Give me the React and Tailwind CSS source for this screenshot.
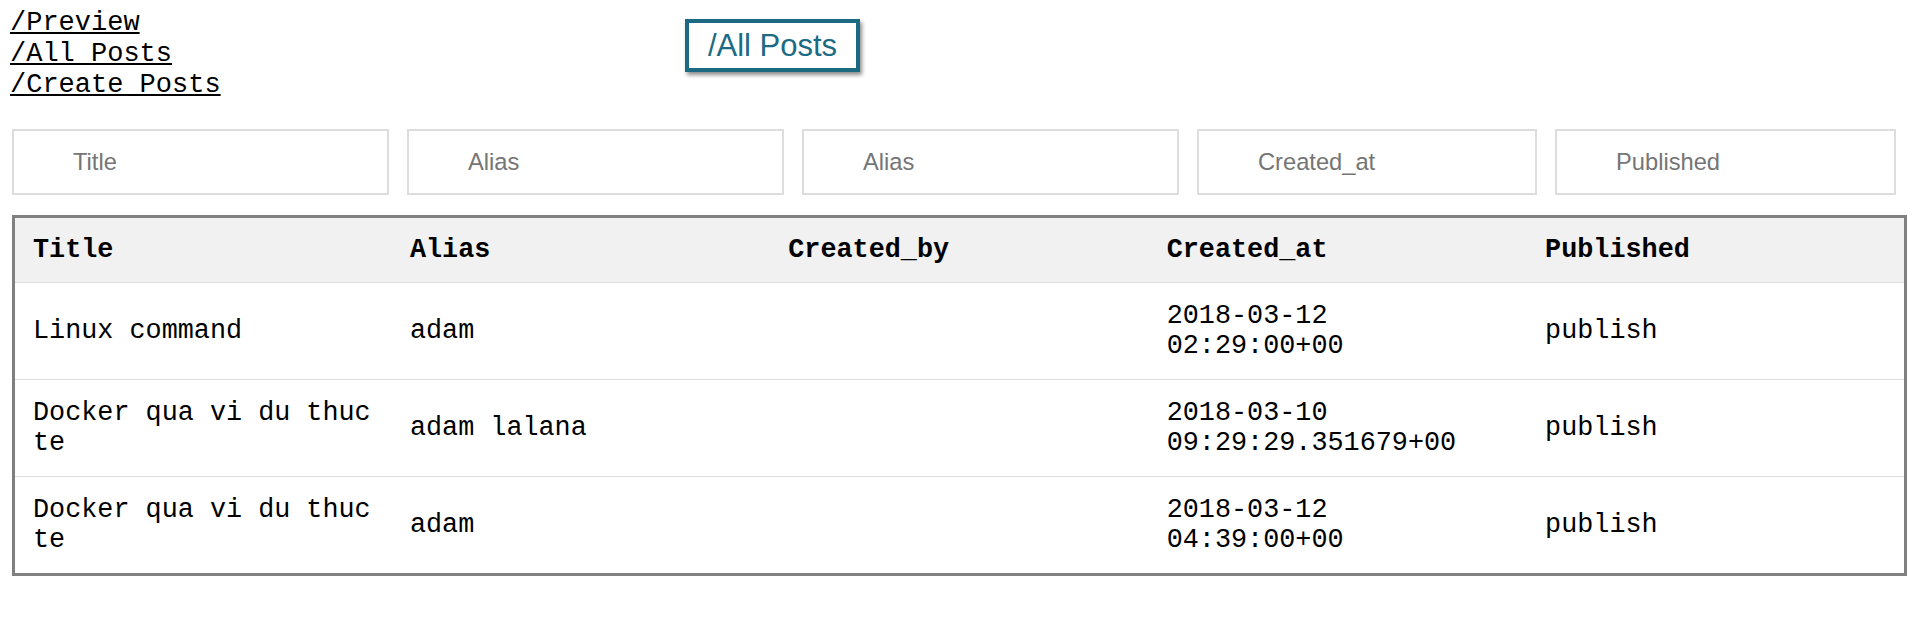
import React from 'react';

const links = ['/Preview', '/All Posts', '/Create Posts'];

const filters = [
  { label: 'Title', w: 'w-[377px]' },
  { label: 'Alias', w: 'w-[377px]' },
  { label: 'Alias', w: 'w-[377px]' },
  { label: 'Created_at', w: 'w-[340px]' },
  { label: 'Published', w: 'w-[341px]' },
];

const posts = [
  { title: 'Linux command', alias: 'adam', createdBy: '', createdAt: '2018-03-12 02:29:00+00', published: 'publish' },
  { title: 'Docker qua vi du thuc te', alias: 'adam lalana', createdBy: '', createdAt: '2018-03-10 09:29:29.351679+00', published: 'publish' },
  { title: 'Docker qua vi du thuc te', alias: 'adam', createdBy: '', createdAt: '2018-03-12 04:39:00+00', published: 'publish' },
];

const cell = 'pl-[18px] pr-[18px] align-middle text-left';

const App = () => {
  return (
    <div className="min-h-screen bg-white text-black font-['Liberation_Mono',monospace]">
      {/* Header */}
      <div className="flex items-start">
        <div className="w-[685px] pl-[10px] pt-[8px] text-[27px] leading-[31px]">
          {links.map((l) => (
            <div key={l}>
              <a href="#" className="underline underline-offset-[2px] decoration-[2px]">{l}</a>
            </div>
          ))}
        </div>
        <div className="mt-[19px] w-[175px] h-[53px] border-[4px] border-[#1b6a82] shadow-[2px_3px_4px_rgba(0,0,0,0.45)] flex items-center justify-center">
          <span className="font-['Liberation_Sans',Arial,sans-serif] text-[31px] text-[#1c6a84] leading-none">/All Posts</span>
        </div>
      </div>

      {/* Filters */}
      <div className="flex gap-[18px] pl-[12px] mt-[28px]">
        {filters.map((f, i) => (
          <input
            key={i}
            placeholder={f.label}
            className={`${f.w} h-[66px] border-2 border-[#dddddd] pl-[59px] font-['Liberation_Sans',Arial,sans-serif] text-[23.7px] text-black placeholder:text-[#757575] outline-none`}
          />
        ))}
      </div>

      {/* Table */}
      <div className="pl-[12px] mt-[20px]">
        <table className="w-[1895px] table-fixed border-collapse border-[3px] border-[#808080] text-[26.8px] leading-[30px]">
          <thead>
            <tr className="bg-[#f1f1f1] border-b border-[#dddddd]">
              {['Title', 'Alias', 'Created_by', 'Created_at', 'Published'].map((h) => (
                <th key={h} className={`${cell} py-[17px] font-bold`}>{h}</th>
              ))}
            </tr>
          </thead>
          <tbody>
            {posts.map((p, i) => (
              <tr key={i} className={i < posts.length - 1 ? 'border-b border-[#dddddd]' : ''}>
                <td className={`${cell} py-[18px]`}>{p.title}</td>
                <td className={`${cell} py-[18px]`}>{p.alias}</td>
                <td className={`${cell} py-[18px]`}>{p.createdBy}</td>
                <td className={`${cell} py-[18px]`}>{p.createdAt}</td>
                <td className={`${cell} py-[18px]`}>{p.published}</td>
              </tr>
            ))}
          </tbody>
        </table>
      </div>
    </div>
  );
};

export default App;
